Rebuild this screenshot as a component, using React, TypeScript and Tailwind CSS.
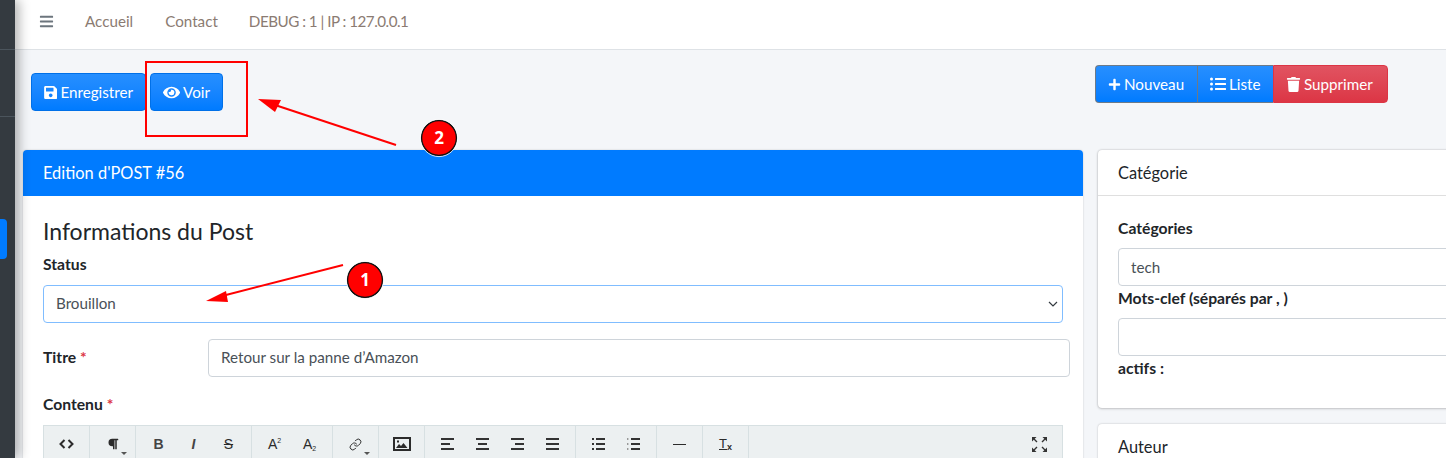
import React from "react";
import { FaSave, FaEye, FaPlus, FaListUl, FaTrash, FaParagraph, FaBars } from "react-icons/fa";
import { Link as LinkIcon } from "lucide-react";

const btn =
  "flex items-center gap-[3px] h-[38px] px-[12px] text-white text-[15.2px] border border-[#0070e8] bg-gradient-to-b from-[#268fff] to-[#007bff]";
const boldLabel = "block h-[24px] font-bold text-[15.7px] leading-[24px]";

const Tool = ({ children, caret }: { children: React.ReactNode; caret?: boolean }) => (
  <div className="relative w-[35px] h-[36px] flex items-center justify-center text-[#2b2b2b] font-['Liberation_Sans',sans-serif]">
    {children}
    {caret && (
      <span className="absolute right-[3px] bottom-[7px] border-x-[3px] border-t-[3px] border-x-transparent border-t-[#555]" />
    )}
  </div>
);

const Group = ({ children }: { children: React.ReactNode }) => (
  <div className="flex px-[5px] border-r border-[#d7e0e2] shrink-0">{children}</div>
);

// three bars of the align icons, x start and width of each row
const Bars = ({ rows }: { rows: [number, number][] }) => (
  <svg width="13" height="12" viewBox="0 0 13 12" fill="#333">
    {rows.map(([x, w], i) => (
      <rect key={i} x={x} y={i * 5} width={w} height="2" />
    ))}
  </svg>
);

const ListBars = ({ numbered }: { numbered?: boolean }) => (
  <svg width="13" height="12" viewBox="0 0 13 12" fill="#333">
    {[0, 5, 10].map((y) => (
      <g key={y}>
        <rect x="4" y={y} width="9" height="2" />
        {numbered ? (
          <rect x="0" y={y} width="1.4" height="2" fill="#999" />
        ) : (
          <rect x="0" y={y} width="2" height="2" />
        )}
      </g>
    ))}
  </svg>
);

const Annotations = () => (
  <svg className="absolute left-0 top-0 pointer-events-none" width="1446" height="458">
    <rect x="146" y="62" width="101" height="74" fill="none" stroke="#ff0000" strokeWidth="2" />
    <line x1="396" y1="145" x2="272" y2="104" stroke="#ff0000" strokeWidth="2" />
    <polygon points="258,99 281,100 275,112" fill="#ff0000" />
    <line x1="343" y1="265" x2="222" y2="296" stroke="#ff0000" strokeWidth="2" />
    <polygon points="206,301 226,291 228,302" fill="#ff0000" />
    <circle cx="439" cy="138" r="17.5" fill="#ff0000" stroke="#111" strokeWidth="1.5" />
    <circle cx="439" cy="138" r="18.6" fill="none" stroke="#fff" strokeWidth="0.8" />
    <circle cx="365" cy="280" r="17.5" fill="#ff0000" stroke="#111" strokeWidth="1.5" />
    <circle cx="365" cy="280" r="18.6" fill="none" stroke="#fff" strokeWidth="0.8" />
    <text x="439" y="144" textAnchor="middle" fill="#fff" fontSize="17" fontWeight="700" fontFamily="'Open Sans', sans-serif">2</text>
    <text x="365" y="286" textAnchor="middle" fill="#fff" fontSize="17" fontWeight="700" fontFamily="'Open Sans', sans-serif">1</text>
  </svg>
);

export default function App() {
  return (
    <div className="relative flex w-[1446px] h-[458px] overflow-hidden bg-[#f4f6f9] font-['Lato','Open_Sans',sans-serif] text-[15.2px] text-[#212529]">
      {/* sidebar */}
      <aside className="w-[15px] shrink-0 bg-[#343a40] flex flex-col shadow-[4px_0_12px_rgba(0,0,0,0.3)] z-10">
        <div className="h-[50px] border-b border-[#4b545c]" />
        <div className="h-[67px] border-b border-[#4b545c]" />
        <div className="mt-[102px] w-[7px] h-[40px] bg-[#007bff] rounded-r-[4px]" />
      </aside>

      <main className="flex-1 min-w-0 flex flex-col">
        {/* navbar */}
        <nav className="h-[50px] shrink-0 bg-white border-b border-[#dee2e6] flex items-center text-[#8b7b72] pb-[7px]">
          <FaBars className="ml-[24px] text-[#6c757d]" size={15} />
          <span className="ml-[31px]">Accueil</span>
          <span className="ml-[32px]">Contact</span>
          <span className="ml-[31px] tracking-[-0.5px]">DEBUG : 1 | IP : 127.0.0.1</span>
        </nav>

        {/* actions */}
        <div className="h-[100px] shrink-0 flex justify-between">
          <div className="flex items-start gap-[4px] pl-[16px] pt-[23px]">
            <button className={`${btn} w-[115px] rounded-[4px]`}>
              <FaSave size={15} /> Enregistrer
            </button>
            <button className={`${btn} w-[73px] rounded-[4px]`}>
              <FaEye size={19} /> Voir
            </button>
          </div>
          <div className="flex items-start pr-[58px] pt-[15px]">
            <button className={`${btn} w-[102px] rounded-l-[4px] !border-[#6c7a89] !border-r-0`}>
              <FaPlus size={13} /> Nouveau
            </button>
            <button className={`${btn} w-[76px] !border-[#6c7a89] !border-r-0`}>
              <FaListUl size={16} /> Liste
            </button>
            <button className="flex items-center gap-[3px] w-[115px] h-[38px] px-[12px] text-white text-[15.2px] rounded-r-[4px] border border-[#dc3545] bg-gradient-to-b from-[#e15361] to-[#dc3545]">
              <FaTrash size={15} /> Supprimer
            </button>
          </div>
        </div>

        <div className="flex items-start gap-[15px] pl-[8px]">
          {/* main card */}
          <section className="w-[1060px] h-[400px] shrink-0 bg-white rounded-t-[4px] shadow-[0_0_2px_rgba(0,0,0,0.2)]">
            <header className="h-[46px] flex items-center px-[20px] bg-[#007bff] rounded-t-[4px] text-white text-[16.4px]">
              Edition d'POST #56
            </header>
            <div className="px-[20px] pt-[21px]">
              <h2 className="text-[23px] leading-[29px]">Informations du Post</h2>
              <label className={`${boldLabel} mt-[6px]`}>Status</label>
              <div className="mt-[9px] h-[38px] w-[1020px] flex items-center justify-between pl-[12px] pr-[13px] rounded-[4px] border border-[#80bdff] text-[#495057]">
                <span className="-mt-[1px]">Brouillon</span>
                <svg width="10" height="8" viewBox="0 0 10 8" className="-mr-[9px]">
                  <path d="M1 2l4 4 4-4" fill="none" stroke="#343a40" strokeWidth="1.2" />
                </svg>
              </div>
              <div className="mt-[16px] flex items-center w-[1027px]">
                <label className="w-[165px] shrink-0 font-bold text-[15.7px]">
                  Titre <span className="text-[#dc3545]">*</span>
                </label>
                <div className="flex-1 h-[38px] flex items-center pl-[12px] pr-[13px] rounded-[4px] border border-[#ced4da] text-[#495057]">
                  <span className="-mt-[1px]">Retour sur la panne d’Amazon</span>
                </div>
              </div>
              <label className={`${boldLabel} mt-[15px]`}>
                Contenu <span className="text-[#dc3545]">*</span>
              </label>
              <div className="mt-[9px] w-[1020px] h-[40px] flex justify-between bg-[#ecf0f1] border-t border-x border-[#d7e0e2]">
                <div className="flex">
                  <Group>
                    <Tool>
                      <svg width="15" height="10" viewBox="0 0 15 10" fill="none" stroke="#2b2b2b" strokeWidth="2">
                        <path d="M5.5 1L1.5 5l4 4M9.5 1l4 4-4 4" />
                      </svg>
                    </Tool>
                  </Group>
                  <Group>
                    <Tool caret><FaParagraph size={12} /></Tool>
                  </Group>
                  <Group>
                    <Tool><span className="font-bold text-[14px] text-[#444]">B</span></Tool>
                    <Tool><span className="italic text-[14px] font-bold text-[#444]">I</span></Tool>
                    <Tool><span className="text-[14px] line-through">S</span></Tool>
                  </Group>
                  <Group>
                    <Tool>
                      <span className="text-[14px]">A</span>
                      <span className="text-[7px] leading-none mb-[8px]">2</span>
                    </Tool>
                    <Tool>
                      <span className="text-[14px]">A</span>
                      <span className="text-[7px] leading-none mt-[8px]">2</span>
                    </Tool>
                  </Group>
                  <Group>
                    <Tool caret><LinkIcon size={13} strokeWidth={1.8} /></Tool>
                  </Group>
                  <Group>
                    <Tool>
                      <svg width="18" height="14" viewBox="0 0 18 14">
                        <rect x="1" y="1" width="16" height="12" fill="none" stroke="#2b2b2b" strokeWidth="2" />
                        <path d="M3 11l3-4 2 2 2.5-3 4 5z" fill="#2b2b2b" />
                        <rect x="4" y="3.5" width="2" height="2" fill="#2b2b2b" />
                      </svg>
                    </Tool>
                  </Group>
                  <Group>
                    <Tool><Bars rows={[[0, 13], [0, 9], [0, 13]]} /></Tool>
                    <Tool><Bars rows={[[0, 13], [2, 9], [0, 13]]} /></Tool>
                    <Tool><Bars rows={[[0, 13], [4, 9], [0, 13]]} /></Tool>
                    <Tool><Bars rows={[[0, 13], [0, 13], [0, 13]]} /></Tool>
                  </Group>
                  <Group>
                    <Tool><ListBars /></Tool>
                    <Tool><ListBars numbered /></Tool>
                  </Group>
                  <Group>
                    <Tool><span className="block w-[13px] h-[1px] bg-[#2b2b2b]" /></Tool>
                  </Group>
                  <Group>
                    <Tool>
                      <span className="text-[13px] underline">T</span>
                      <span className="text-[9px] font-bold leading-none mt-[7px]">x</span>
                    </Tool>
                  </Group>
                </div>
                <div className="pr-[5px]">
                  <Tool>
                    <svg width="15" height="15" viewBox="0 0 15 15" fill="#333" stroke="#333">
                      <path strokeWidth="0" d="M0 0h4.5L0 4.5zM15 0v4.5L10.5 0zM0 15v-4.5L4.5 15zM15 15h-4.5L15 10.5z" />
                      <path strokeWidth="1.4" d="M2 2l3 3M13 2l-3 3M2 13l3-3M13 13l-3-3" />
                    </svg>
                  </Tool>
                </div>
              </div>
            </div>
          </section>

          {/* side cards */}
          <div className="w-[420px] shrink-0 flex flex-col gap-[16px]">
            <section className="h-[258px] bg-white rounded-[4px] shadow-[0_0_2px_rgba(0,0,0,0.25),0_1px_3px_rgba(0,0,0,0.15)]">
              <header className="h-[46px] flex items-center px-[20px] pt-[2px] border-b border-[#dfdfdf] text-[16.4px]">
                Catégorie
              </header>
              <div className="px-[20px] pt-[20px]">
                <label className={boldLabel}>Catégories</label>
                <div className="mt-[8px] h-[38px] flex items-center pl-[12px] rounded-l-[4px] border border-[#ced4da] text-[#495057]">
                  tech
                </div>
                <label className={boldLabel}>Mots-clef (séparés par , )</label>
                <div className="mt-[8px] h-[38px] rounded-l-[4px] border border-[#ced4da]" />
                <label className={boldLabel}>actifs :</label>
              </div>
            </section>
            <section className="h-[60px] bg-white rounded-[4px] shadow-[0_0_2px_rgba(0,0,0,0.25)]">
              <header className="h-[46px] flex items-center px-[20px] text-[16.4px]">Auteur</header>
            </section>
          </div>
        </div>
      </main>
      <Annotations />
    </div>
  );
}
